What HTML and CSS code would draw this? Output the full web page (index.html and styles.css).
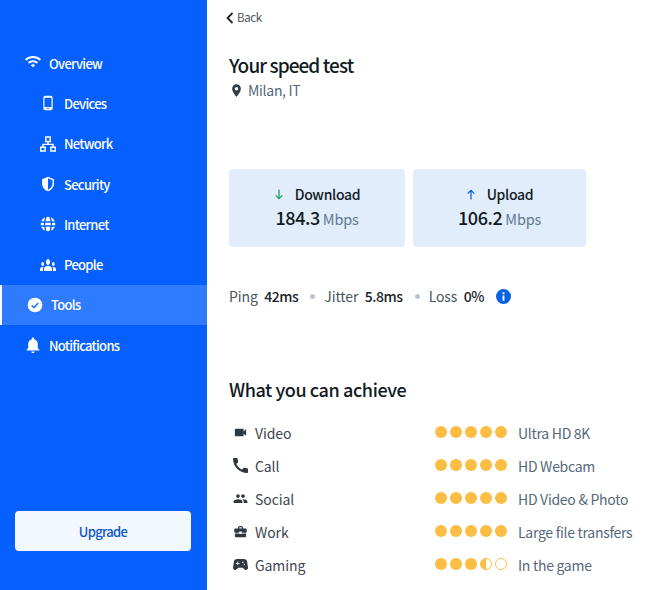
FILE: index.html
```html
<!DOCTYPE html>
<html>
	<head>
		<meta charset="utf-8">
		<meta name="viewport" content="width=device-width, initial-scale=1.0">
		<link rel="stylesheet" href="styles.css">
	</head>
	<body>
		<aside class="sidebar">
			<nav class="menu">
				<div class="menu-item">
					<svg class="icon" viewBox="1 3 22 22"><path d="M1 9l2 2c4.97-4.97 13.03-4.97 18 0l2-2C16.93 2.93 7.08 2.93 1 9zm8 8l3 3 3-3c-1.65-1.66-4.34-1.66-6 0zm-4-4l2 2c2.76-2.76 7.24-2.76 10 0l2-2C15.14 9.14 8.87 9.14 5 13z"/></svg>
					Overview
				</div>
				<div class="menu-item sub">
					<svg class="icon" viewBox="0 0 24 24"><path d="M16 1H8C6.34 1 5 2.34 5 4v16c0 1.66 1.34 3 3 3h8c1.66 0 3-1.34 3-3V4c0-1.66-1.34-3-3-3zm-2 20h-4v-1h4v1zm3.25-3H6.75V4h10.5v14z"/></svg>
					Devices
				</div>
				<div class="menu-item sub">
					<svg class="icon" viewBox="1 1 22 22"><path class="line" d="M9 2.500h6v6H9zM2 16.500h6v5H2zM16 16.500h6v5h-6zM12 8.500v4M5 16.500v-4h14v4"/></svg>
					Network
				</div>
				<div class="menu-item sub">
					<svg class="icon" viewBox="0 0 24 24"><path d="M12 1L3 5v6c0 5.550 3.840 10.740 9 12 5.160-1.260 9-6.450 9-12V5l-9-4zm0 3.200v16.500c3.500-1.200 6.800-5.200 6.800-9.700V6.400L12 3.200z" fill-rule="evenodd"/></svg>
					Security
				</div>
				<div class="menu-item sub">
					<svg class="icon" viewBox="0 0 24 24"><circle cx="12" cy="12" r="11"/><path class="cut" d="M1 9h22M1 15h22M9 1.500c-2.500 6-2.500 15 0 21M15 1.500c2.500 6 2.500 15 0 21"/></svg>
					Internet
				</div>
				<div class="menu-item sub">
					<svg class="icon" viewBox="0 4 24 16" preserveAspectRatio="none"><path d="M12 12.750c1.630 0 3.070.39 4.240.9 1.080.48 1.760 1.560 1.760 2.730V18H6v-1.610c0-1.180.68-2.260 1.760-2.730 1.170-.52 2.610-.91 4.240-.91zM4 13c1.100 0 2-.9 2-2s-.9-2-2-2-2 .9-2 2 .9 2 2 2zm1.130 1.100c-.37-.06-.74-.1-1.130-.1-.99 0-1.930.21-2.780.58C.48 14.900 0 15.620 0 16.430V18h4.500v-1.610c0-.83.23-1.610.63-2.290zM20 13c1.100 0 2-.9 2-2s-.9-2-2-2-2 .9-2 2 .9 2 2 2zm4 3.430c0-.81-.48-1.530-1.220-1.850-.85-.37-1.790-.58-2.780-.58-.39 0-.76.04-1.130.1.4.68.63 1.460.63 2.290V18H24v-1.570zM12 6c1.660 0 3 1.340 3 3s-1.340 3-3 3-3-1.340-3-3 1.340-3 3-3z"/></svg>
					People
				</div>
				<div class="menu-item active">
					<svg class="icon" viewBox="0 0 24 24"><circle cx="12" cy="12" r="11"/><path class="cut" d="M7 12.500l3.500 3.500L17 9"/></svg>
					Tools
				</div>
				<div class="menu-item">
					<svg class="icon" viewBox="2.500 2 19 20"><path d="M12 22c1.100 0 2-.9 2-2h-4c0 1.100.89 2 2 2zm6-6v-5c0-3.070-1.640-5.640-4.500-6.320V4c0-.83-.67-1.500-1.500-1.500s-1.500.67-1.500 1.500v.68C7.630 5.360 6 7.920 6 11v5l-2 2v1h16v-1l-2-2z"/></svg>
					Notifications
				</div>
			</nav>
			<button class="upgrade">Upgrade</button>
		</aside>

		<main class="content">
			<div class="back">
				<svg class="chevron" viewBox="0 0 10 12"><path d="M7.500 1L2.500 6l5 5"/></svg>
				Back
			</div>
			<h1>Your speed test</h1>
			<div class="place">
				<svg class="pin" viewBox="0 0 24 24"><path fill-rule="evenodd" d="M12 2C8.130 2 5 5.130 5 9c0 5.250 7 13 7 13s7-7.750 7-13c0-3.870-3.130-7-7-7zm0 9.800a2.800 2.800 0 1 1 0-5.600 2.800 2.800 0 0 1 0 5.600z"/></svg>
				Milan, IT
			</div>

			<div class="cards">
				<div class="card download">
					<div class="card-title">
						<svg class="arrow" viewBox="0 0 12 14"><path d="M6 1v11M2 8l4 4 4-4"/></svg>
						Download
					</div>
					<div class="speed"><b>184.3</b> Mbps</div>
				</div>
				<div class="card upload">
					<div class="card-title">
						<svg class="arrow" viewBox="0 0 12 14"><path d="M6 13V2M2 6l4-4 4 4"/></svg>
						Upload
					</div>
					<div class="speed"><b>106.2</b> Mbps</div>
				</div>
			</div>

			<div class="stats">
				<span>Ping</span><b>42ms</b>
				<i class="sep"></i>
				<span>Jitter</span><b>5.8ms</b>
				<i class="sep"></i>
				<span>Loss</span><b>0%</b>
				<svg class="info" viewBox="0 0 16 16"><circle cx="8" cy="8" r="8"/><path d="M7 7h2v5.500H7zM7 3.500h2v2H7z"/></svg>
			</div>

			<h2>What you can achieve</h2>
			<div class="achieve">
				<div class="row">
					<div class="use">
						<svg class="use-icon" viewBox="0 0 24 24"><path d="M17 10.500V7c0-.55-.45-1-1-1H4c-.55 0-1 .45-1 1v10c0 .55.45 1 1 1h12c.55 0 1-.45 1-1v-3.500l4 4v-11l-4 4z"/></svg>
						Video
					</div>
					<div class="dots"><i></i><i></i><i></i><i></i><i></i></div>
					<div class="quality">Ultra HD 8K</div>
				</div>
				<div class="row">
					<div class="use">
						<svg class="use-icon" viewBox="3 3 18 18"><path d="M20.010 15.380c-1.230 0-2.420-.2-3.530-.56-.35-.12-.74-.03-1.010.24l-1.570 1.970c-2.830-1.350-5.480-3.900-6.890-6.830l1.950-1.660c.27-.28.35-.67.24-1.020-.37-1.110-.56-2.300-.56-3.530 0-.54-.45-.99-.99-.99H4.190C3.650 3 3 3.240 3 3.990 3 13.280 10.730 21 20.010 21c.71 0 .99-.63.99-1.180v-3.450c0-.54-.45-.99-.99-.99z"/></svg>
						Call
					</div>
					<div class="dots"><i></i><i></i><i></i><i></i><i></i></div>
					<div class="quality">HD Webcam</div>
				</div>
				<div class="row">
					<div class="use">
						<svg class="use-icon" viewBox="0 0 24 24"><path d="M16 11c1.660 0 2.990-1.340 2.990-3S17.660 5 16 5c-1.660 0-3 1.340-3 3s1.340 3 3 3zm-8 0c1.660 0 2.990-1.340 2.990-3S9.660 5 8 5C6.340 5 5 6.340 5 8s1.340 3 3 3zm0 2c-2.330 0-7 1.170-7 3.500V19h14v-2.500c0-2.330-4.670-3.500-7-3.500zm8 0c-.29 0-.62.02-.97.05 1.160.84 1.970 1.970 1.970 3.450V19h6v-2.500c0-2.330-4.670-3.500-7-3.500z"/></svg>
						Social
					</div>
					<div class="dots"><i></i><i></i><i></i><i></i><i></i></div>
					<div class="quality">HD Video &amp; Photo</div>
				</div>
				<div class="row">
					<div class="use">
						<svg class="use-icon" viewBox="0 0 24 24"><path d="M10 16v-1H3.010L3 19c0 1.110.89 2 2 2h14c1.110 0 2-.89 2-2v-4h-7v1h-4zm10-9h-4.010V5l-2-2h-4l-2 2v2H4c-1.100 0-2 .9-2 2v3c0 1.110.89 2 2 2h6v-2h4v2h6c1.100 0 2-.9 2-2V9c0-1.100-.9-2-2-2zm-6 0h-4V5h4v2z"/></svg>
						Work
					</div>
					<div class="dots"><i></i><i></i><i></i><i></i><i></i></div>
					<div class="quality">Large file transfers</div>
				</div>
				<div class="row">
					<div class="use">
						<svg class="use-icon" viewBox="2.400 3 19.200 18"><path d="M21.580 16.090l-1.090-7.660C20.210 6.460 18.520 5 16.530 5H7.470C5.480 5 3.790 6.460 3.510 8.430l-1.090 7.660C2.200 17.630 3.390 19 4.940 19c.68 0 1.320-.27 1.800-.75L9 16h6l2.250 2.250c.48.48 1.130.75 1.800.75 1.560 0 2.750-1.370 2.530-2.910zM11 11H9v2H8v-2H6v-1h2V8h1v2h2v1zm4-1c-.55 0-1-.45-1-1s.45-1 1-1 1 .45 1 1-.45 1-1 1zm2 3c-.55 0-1-.45-1-1s.45-1 1-1 1 .45 1 1-.45 1-1 1z"/></svg>
						Gaming
					</div>
					<div class="dots"><i></i><i></i><i></i><i class="half"></i><i class="empty"></i></div>
					<div class="quality">In the game</div>
				</div>
			</div>
		</main>
	</body>
</html>
```

FILE: styles.css
```css
* {
	margin:0;
	padding:0;
	box-sizing:border-box;
}
body {
	display:flex;
	height:590px;
	overflow:hidden;
	background-color:#fff;
	color:#111a22;
	font-family:"Noto Sans CJK SC", "Noto Sans", sans-serif;
	font-size:14px;
}

/* sidebar */
.sidebar {
	flex:none;
	display:flex;
	flex-direction:column;
	width:207px;
	padding-top:43px;
	padding-bottom:39px;
	background-color:#0560fe;
	color:#fff;
}
.menu {
	flex:auto;
}
.menu-item {
	display:flex;
	align-items:center;
	gap:8px;
	height:40.3px;
	padding-left:25px;
	font-size:13px;
	font-weight:500;
	letter-spacing:-0.7px;
	line-height:1;
}
.menu-item.sub {
	padding-left:40px;
}
.menu-item.active {
	padding-left:25px;
	border-left:2px solid #fff;
	background-color:#2f7bff;
}
.icon {
	flex:none;
	width:16px;
	height:16px;
	fill:#fff;
}
.icon .line {
	fill:none;
	stroke:#fff;
	stroke-width:2;
}
.icon .cut {
	fill:none;
	stroke:#0560fe;
	stroke-width:2;
}
.active .icon .cut {
	stroke:#2f7bff;
	stroke-width:2.5;
}
.upgrade {
	flex:none;
	width:176px;
	height:40px;
	margin-left:15px;
	border:none;
	border-radius:4px;
	background-color:#f3f8fe;
	color:#0b56c4;
	font-family:inherit;
	font-size:13px;
	font-weight:500;
	letter-spacing:-0.7px;
}

/* main part */
.content {
	flex:auto;
	padding-left:22px;
	padding-right:10px;
}
.back {
	display:flex;
	align-items:center;
	gap:2px;
	height:18px;
	margin-top:9px;
	margin-left:-4px;
	color:#4a5560;
	font-size:11.5px;
	letter-spacing:-0.4px;
	line-height:1;
}
.chevron {
	width:10px;
	height:12px;
	fill:none;
	stroke:#222;
	stroke-width:1.800;
}
h1 {
	margin-top:23px;
	font-size:19px;
	font-weight:500;
	letter-spacing:-0.92px;
	line-height:30px;
}
.place {
	display:flex;
	align-items:center;
	gap:4px;
	height:20px;
	color:#53687a;
	font-size:14px;
	letter-spacing:-0.3px;
}
.pin {
	width:15px;
	height:15px;
	fill:#333c44;
}

.cards {
	display:flex;
	gap:8px;
	margin-top:69px;
}
.card {
	display:flex;
	flex-direction:column;
	align-items:center;
	justify-content:center;
	width:176px;
	height:78px;
	padding-bottom:6px;
	border-radius:4px;
	background-color:#e2edfb;
}
.card.upload {
	width:173px;
}
.card-title {
	display:flex;
	align-items:center;
	gap:11px;
	height:24px;
	font-size:14px;
	font-weight:500;
	letter-spacing:-0.3px;
}
.arrow {
	width:10px;
	height:13px;
	fill:none;
	stroke-width:1.500;
}
.download .arrow {
	stroke:#18a05e;
}
.upload .arrow {
	stroke:#0b62e0;
}
.speed {
	height:22px;
	color:#5f7a94;
	font-size:14.5px;
	letter-spacing:-0.2px;
	line-height:22px;
}
.speed b {
	color:#111a22;
	font-size:18px;
	font-weight:500;
	letter-spacing:-0.4px;
}

.stats {
	display:flex;
	align-items:center;
	height:20px;
	margin-top:39px;
	color:#4a5560;
	font-size:14px;
	letter-spacing:-0.1px;
}
.stats b {
	margin-left:6.5px;
	color:#1b232b;
	font-weight:500;
	letter-spacing:-0.45px;
}
.sep {
	width:5px;
	height:5px;
	margin:0 9px 0 12px;
	border-radius:50%;
	background-color:#bcc5cd;
}
.info {
	width:15px;
	height:15px;
	margin-left:12px;
}
.info circle {
	fill:#0b62e0;
}
.info path {
	fill:#fff;
}

h2 {
	margin-top:69px;
	font-size:18px;
	font-weight:500;
	letter-spacing:-0.4px;
	line-height:28px;
}
.achieve {
	margin-top:13px;
}
.row {
	display:grid;
	grid-template-columns:206px 83px 1fr;
	align-items:center;
	height:33px;
}
.use {
	display:flex;
	align-items:center;
	gap:7px;
	padding-left:4px;
	color:#3c4650;
	font-size:14px;
	letter-spacing:-0.1px;
}
.use-icon {
	width:15px;
	height:15px;
	fill:#2f3841;
}
.dots {
	display:flex;
	gap:3px;
	margin-bottom:2px;
}
.dots i {
	width:12px;
	height:12px;
	border-radius:50%;
	background-color:#fbbd43;
}
.dots .half {
	border:1px solid #fbbd43;
	background:linear-gradient(to right, #fbbd43 50%, #fff 50%);
}
.dots .empty {
	border:1px solid #fbbd43;
	background:#fff;
}
.quality {
	color:#56697a;
	font-size:14px;
	letter-spacing:-0.28px;
	white-space:nowrap;
}
```
